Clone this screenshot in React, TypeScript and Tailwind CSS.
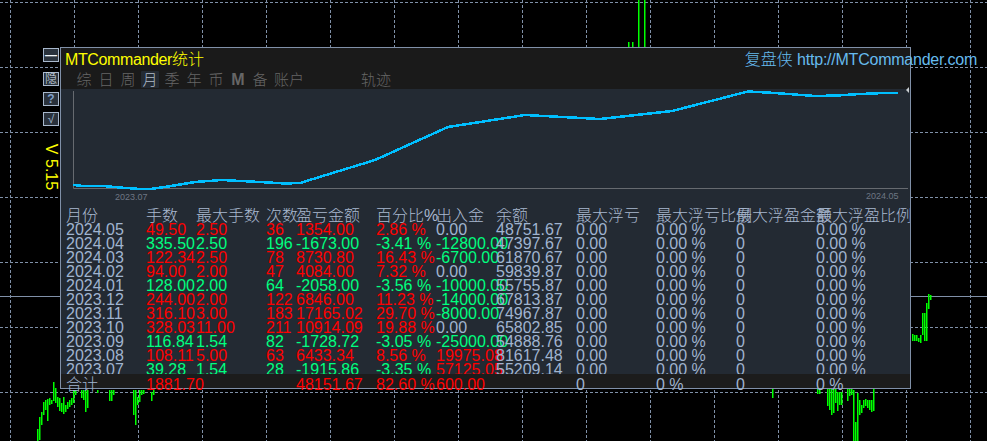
import React from "react";

const vGrid = Array.from({ length: 16 }, (_, i) => 10 + i * 64);
const hGrid = [2, 67, 132, 197, 262, 327, 392];

const candles: [number, number, number][] = [
  [628, 42, 47], [632, 42, 47], [638, 0, 47], [644, 0, 47],
  ...([
    [110, 448, 483], [116, 410, 480], [122, 395, 435], [128, 365, 405], [134, 360, 390], [140, 358, 425],
    [146, 355, 375], [152, 360, 372], [158, 307, 365], [164, 325, 370], [170, 350, 380], [176, 355, 395],
    [182, 370, 397], [188, 350, 400], [194, 375, 395], [200, 365, 385], [206, 360, 380], [212, 355, 375],
    [218, 330, 368], [224, 330, 345], [242, 330, 355], [248, 330, 360], [254, 330, 395], [260, 330, 385],
    [290, 330, 338], [326, 330, 362], [332, 330, 362], [338, 330, 345], [398, 330, 405], [404, 330, 435],
    [410, 350, 375], [416, 330, 365], [422, 330, 345], [428, 330, 342], [452, 335, 362], [458, 330, 345],
  ].map(([x, a, b]) => [x / 3, 280 + a / 3, 280 + b / 3] as [number, number, number])),
  ...([
    [97, 328, 356], [230, 328, 344], [236, 328, 344], [260, 328, 380], [266, 328, 390], [272, 328, 405],
    [278, 328, 400], [284, 328, 370], [290, 335, 392], [296, 335, 375], [302, 335, 375], [320, 328, 365],
    [326, 328, 350], [332, 328, 345], [338, 330, 483], [344, 425, 483], [350, 340, 483], [356, 360, 405],
    [362, 375, 400], [368, 360, 385], [374, 358, 380], [380, 360, 385], [386, 360, 390], [392, 360, 395],
    [398, 328, 395], [517, 163, 185], [523, 165, 183], [529, 165, 183], [535, 175, 188], [541, 165, 188],
    [547, 100, 165], [553, 98, 182], [559, 68, 182], [565, 42, 88], [571, 45, 60],
  ].map(([x, a, b]) => [740 + x / 3, 280 + a / 3, 280 + b / 3] as [number, number, number])),
];

const curve =
  "73,185 83,186 103,186 120,187.5 140,189 150,189 165,187 195,182 222,180 260,182 285,183.5 300,183 375,160 448,127 525,115 600,119 672,111 748,91.5 775,93 795,94.5 815,96 837,95.5 860,94 885,93 898,93";

const R = "text-[#ff0000]";
const G = "text-[#00ff7f]";
const N = "text-[#a0b4d0]";

type Row = [string, string, string, string, string, string, string, string];
const rows: Row[] = [
  ["2024.05", "49.50", "2.50", "36", "1354.00", "2.86 %", "0.00", "48751.67"],
  ["2024.04", "335.50", "2.50", "196", "-1673.00", "-3.41 %", "-12800.00", "47397.67"],
  ["2024.03", "122.34", "2.50", "78", "8730.80", "16.43 %", "-6700.00", "61870.67"],
  ["2024.02", "94.00", "2.00", "47", "4084.00", "7.32 %", "0.00", "59839.87"],
  ["2024.01", "128.00", "2.00", "64", "-2058.00", "-3.56 %", "-10000.00", "55755.87"],
  ["2023.12", "244.00", "2.00", "122", "6846.00", "11.23 %", "-14000.00", "67813.87"],
  ["2023.11", "316.10", "3.00", "183", "17165.02", "29.70 %", "-8000.00", "74967.87"],
  ["2023.10", "328.03", "11.00", "211", "10914.09", "19.88 %", "0.00", "65802.85"],
  ["2023.09", "116.84", "1.54", "82", "-1728.72", "-3.05 %", "-25000.00", "54888.76"],
  ["2023.08", "108.11", "5.00", "63", "6433.34", "8.56 %", "19975.08", "81617.48"],
  ["2023.07", "39.28", "1.54", "28", "-1915.86", "-3.35 %", "57125.05", "55209.14"],
];

const cols = "grid grid-cols-[80px_50px_70px_30px_80px_60px_60px_80px_80px_80px_80px_80px] whitespace-nowrap";
const headers = ["月份", "手数", "最大手数", "次数", "盈亏金额", "百分比%", "出入金", "余额", "最大浮亏", "最大浮亏比例", "最大浮盈金额", "最大浮盈比例"];
const tabs = ["综", "日", "周", "月", "季", "年", "币", "M", "备"];
const sideButtons = [
  { label: "—", cls: "mb-[10px] text-[#f0f4f8] font-bold" },
  { label: "隐", cls: "mb-[6px] text-[#d8e0ea]" },
  { label: "?", cls: "mb-[6px] text-[#7f9fc8] font-bold" },
  { label: "√", cls: "text-[#9fb4cc]" },
];

export default function App() {
  return (
    <div className="relative w-[987px] h-[441px] overflow-hidden bg-black font-light font-['Liberation_Sans','Noto_Sans_CJK_SC',sans-serif]">
      <svg className="absolute inset-0" width="987" height="441" viewBox="0 0 987 441">
        {vGrid.map((x) => (
          <line key={x} x1={x + 0.5} y1="0" x2={x + 0.5} y2="441" stroke="#8090a8" strokeDasharray="3 2" />
        ))}
        {hGrid.map((y) => (
          <line key={y} x1="0" y1={y + 0.5} x2="987" y2={y + 0.5} stroke="#8090a8" strokeDasharray="3 2" />
        ))}
        <line x1="0" y1="296.5" x2="987" y2="296.5" stroke="#8090a8" />
        {candles.map(([x, a, b], i) => (
          <rect key={i} x={Math.round(x)} y={Math.round(a)} width="1.5" height={Math.round(b - a)} fill="#00ff00" />
        ))}
      </svg>

      <div className="absolute left-[43px] top-[48px] flex w-[16px] flex-col items-stretch">
        {sideButtons.map((b) => (
          <div
            key={b.label}
            className={`flex h-[14px] items-center justify-center border border-[#a8b8cc] bg-[#2a323c] text-[12px] leading-none ${b.cls}`}
          >
            {b.label}
          </div>
        ))}
      </div>
      <div className="absolute left-[43px] top-[143px] flex h-[48px] w-[16px] items-center justify-center">
        <span className="rotate-90 whitespace-nowrap text-[16px] leading-none text-[#ffff00]">V 5.15</span>
      </div>

      <div className="absolute left-[60px] top-[47px] flex h-[342px] w-[851px] flex-col border border-[#8090a8] bg-[#232a33]">
        <div className="relative h-[41px] shrink-0 bg-[#1a1a1a]">
          <div className="flex h-[24px] items-center justify-between pl-[4px] text-[16px] leading-none">
            <span className="text-[#ffff00]">
              <span className="tracking-[-0.38px]">MTCommander</span>统计
            </span>
            <span className="-mr-[67px] whitespace-nowrap text-[#66bbee]">
              复盘侠 <span className="tracking-[-0.23px]">http://MTCommander.com</span>
            </span>
          </div>
          <div className="-mt-px flex h-[17px] items-center pl-[12px] text-[15px] leading-none text-[#666666]">
            {tabs.map((t) => (
              <span
                key={t}
                className={`flex h-[17px] w-[22px] items-center justify-center ${t === "月" ? "text-[#b0bac8]" : ""} ${t === "M" ? "font-bold text-[16px]" : ""}`}
              >
                <span className={t === "月" ? "flex h-[17px] w-[18px] items-center justify-center rounded-[1px] bg-[#232a33]" : ""}>{t}</span>
              </span>
            ))}
            <span className="ml-[3px] w-[30px] text-center">账户</span>
            <span className="ml-[57px] w-[30px] text-center">轨迹</span>
          </div>
        </div>

        <div className="relative h-[119px] shrink-0">
          <svg className="absolute left-[-61px] top-[-89px]" width="987" height="230" viewBox="0 0 987 230">
            <path d="M73.5 91V188.5H908" fill="none" stroke="#666a70" />
            <polyline points={curve} fill="none" stroke="#00bfff" strokeWidth="2.5" shapeRendering="crispEdges" />
            <path d="M906 90l3-3v6z" fill="#c8ccd0" />
            <text x="115" y="200" fontSize="9" fill="#6e7784">2023.07</text>
            <text x="866" y="199" fontSize="9" fill="#6e7784">2024.05</text>
          </svg>
        </div>

        <div className="h-[166px] shrink-0 overflow-hidden pl-[5px] pt-px text-[16px] leading-[14px]">
          <div className={`${cols} h-[14px] text-[#a9b9d0]`}>
            {headers.map((h) => (
              <span key={h}>{h}</span>
            ))}
          </div>
          {rows.map((r) => {
            const c = r[4].startsWith("-") ? G : R;
            const out = r[6] === "0.00" ? N : r[6].startsWith("-") ? G : R;
            return (
              <div key={r[0]} className={`${cols} h-[14px]`}>
                <span className={N}>{r[0]}</span>
                <span className={c}>{r[1]}</span>
                <span className={c}>{r[2]}</span>
                <span className={c}>{r[3]}</span>
                <span className={c}>{r[4]}</span>
                <span className={c}>{r[5]}</span>
                <span className={out}>{r[6]}</span>
                <span className={N}>{r[7]}</span>
                <span className={N}>0.00</span>
                <span className={N}>0.00 %</span>
                <span className={N}>0</span>
                <span className={N}>0.00 %</span>
              </div>
            );
          })}
        </div>

        <div className={`${cols} h-[14px] shrink-0 bg-[#1c1c1c] pl-[5px] pt-[4px] text-[16px] leading-[14px] ${N}`}>
          <span>合计</span>
          <span className={R}>1881.70</span>
          <span />
          <span />
          <span className={R}>48151.67</span>
          <span className={R}>82.60 %</span>
          <span className={R}>600.00</span>
          <span />
          <span>0</span>
          <span>0 %</span>
          <span>0</span>
          <span>0 %</span>
        </div>
      </div>
    </div>
  );
}
